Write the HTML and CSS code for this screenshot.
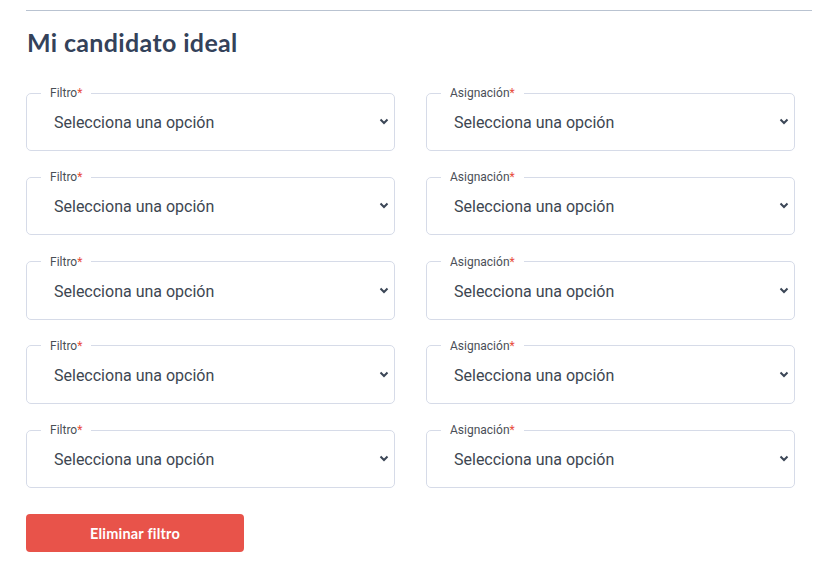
FILE: index.html
```html
<!DOCTYPE html>
<html lang="es">
<head>
<meta charset="utf-8">
<link rel="stylesheet" href="styles.css">
</head>
<body>
<div class="page">
  <div class="rule"></div>
  <h2 class="title">Mi candidato ideal</h2>
  <div class="grid">
    <fieldset class="field"><legend>Filtro<span class="req">*</span></legend><div class="control"><span class="value">Selecciona una opción</span><svg class="chev" width="10" height="7" viewBox="0 0 10 7"><path d="M1.5 1.5 L5 5 L8.5 1.5" fill="none" stroke="#3b4656" stroke-width="2"/></svg></div></fieldset>
    <fieldset class="field"><legend>Asignación<span class="req">*</span></legend><div class="control"><span class="value">Selecciona una opción</span><svg class="chev" width="10" height="7" viewBox="0 0 10 7"><path d="M1.5 1.5 L5 5 L8.5 1.5" fill="none" stroke="#3b4656" stroke-width="2"/></svg></div></fieldset>
    <fieldset class="field"><legend>Filtro<span class="req">*</span></legend><div class="control"><span class="value">Selecciona una opción</span><svg class="chev" width="10" height="7" viewBox="0 0 10 7"><path d="M1.5 1.5 L5 5 L8.5 1.5" fill="none" stroke="#3b4656" stroke-width="2"/></svg></div></fieldset>
    <fieldset class="field"><legend>Asignación<span class="req">*</span></legend><div class="control"><span class="value">Selecciona una opción</span><svg class="chev" width="10" height="7" viewBox="0 0 10 7"><path d="M1.5 1.5 L5 5 L8.5 1.5" fill="none" stroke="#3b4656" stroke-width="2"/></svg></div></fieldset>
    <fieldset class="field"><legend>Filtro<span class="req">*</span></legend><div class="control"><span class="value">Selecciona una opción</span><svg class="chev" width="10" height="7" viewBox="0 0 10 7"><path d="M1.5 1.5 L5 5 L8.5 1.5" fill="none" stroke="#3b4656" stroke-width="2"/></svg></div></fieldset>
    <fieldset class="field"><legend>Asignación<span class="req">*</span></legend><div class="control"><span class="value">Selecciona una opción</span><svg class="chev" width="10" height="7" viewBox="0 0 10 7"><path d="M1.5 1.5 L5 5 L8.5 1.5" fill="none" stroke="#3b4656" stroke-width="2"/></svg></div></fieldset>
    <fieldset class="field"><legend>Filtro<span class="req">*</span></legend><div class="control"><span class="value">Selecciona una opción</span><svg class="chev" width="10" height="7" viewBox="0 0 10 7"><path d="M1.5 1.5 L5 5 L8.5 1.5" fill="none" stroke="#3b4656" stroke-width="2"/></svg></div></fieldset>
    <fieldset class="field"><legend>Asignación<span class="req">*</span></legend><div class="control"><span class="value">Selecciona una opción</span><svg class="chev" width="10" height="7" viewBox="0 0 10 7"><path d="M1.5 1.5 L5 5 L8.5 1.5" fill="none" stroke="#3b4656" stroke-width="2"/></svg></div></fieldset>
    <fieldset class="field"><legend>Filtro<span class="req">*</span></legend><div class="control"><span class="value">Selecciona una opción</span><svg class="chev" width="10" height="7" viewBox="0 0 10 7"><path d="M1.5 1.5 L5 5 L8.5 1.5" fill="none" stroke="#3b4656" stroke-width="2"/></svg></div></fieldset>
    <fieldset class="field"><legend>Asignación<span class="req">*</span></legend><div class="control"><span class="value">Selecciona una opción</span><svg class="chev" width="10" height="7" viewBox="0 0 10 7"><path d="M1.5 1.5 L5 5 L8.5 1.5" fill="none" stroke="#3b4656" stroke-width="2"/></svg></div></fieldset>
  </div>
  <button class="btn">Eliminar filtro</button>
</div>
</body>
</html>
```
FILE: styles.css
```css
html, body {
  margin: 0;
  padding: 0;
  background: #ffffff;
}
.page {
  padding: 10px 2px 0 26px;
  font-family: Roboto, "Liberation Sans", sans-serif;
}
.rule {
  height: 1px;
  background: #b9c3d1;
}
.title {
  margin: 16px 0 0 1px;
  font-family: Lato, "Open Sans", sans-serif;
  font-weight: 700;
  font-size: 25px;
  letter-spacing: 0.35px;
  line-height: 30px;
  color: #34425a;
}
.grid {
  display: grid;
  grid-template-columns: 369px 369px;
  column-gap: 31px;
  row-gap: 19.25px;
  margin-top: 29px;
}
.field {
  margin: 0;
  padding: 0 5px 5px 14px;
  border: 1px solid #d6dbe8;
  border-radius: 5px;
  min-width: 0;
}
.field legend {
  padding: 0 9px;
  font-size: 12px;
  line-height: 14px;
  color: #4a4f57;
}
.req {
  color: #e74c3c;
}
.control {
  height: 45px;
  display: flex;
  align-items: center;
  justify-content: space-between;
  padding-left: 13px;
}
.value {
  font-size: 16px;
  color: #3d4651;
}
.chev {
  display: block;
  margin-top: -2px;
}
.btn {
  display: block;
  margin-top: 26px;
  width: 218px;
  height: 38px;
  border: none;
  border-radius: 4px;
  background: #e8534a;
  color: #ffffff;
  font-family: Lato, "Open Sans", sans-serif;
  font-weight: 700;
  font-size: 14.5px;
  letter-spacing: 0.2px;
}
```
